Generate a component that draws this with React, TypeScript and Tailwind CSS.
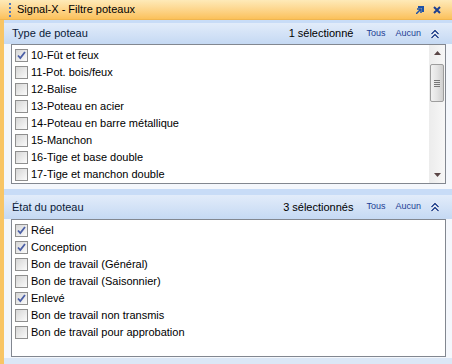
import React from "react";

type Item = { label: string; checked: boolean };

const TYPES: Item[] = [
  { label: "10-Fût et feux", checked: true },
  { label: "11-Pot. bois/feux", checked: false },
  { label: "12-Balise", checked: false },
  { label: "13-Poteau en acier", checked: false },
  { label: "14-Poteau en barre métallique", checked: false },
  { label: "15-Manchon", checked: false },
  { label: "16-Tige et base double", checked: false },
  { label: "17-Tige et manchon double", checked: false },
];

const ETATS: Item[] = [
  { label: "Réel", checked: true },
  { label: "Conception", checked: true },
  { label: "Bon de travail (Général)", checked: false },
  { label: "Bon de travail (Saisonnier)", checked: false },
  { label: "Enlevé", checked: true },
  { label: "Bon de travail non transmis", checked: false },
  { label: "Bon de travail pour approbation", checked: false },
];

function CheckBox({ checked }: { checked: boolean }) {
  return (
    <span className="relative w-[13px] h-[13px] shrink-0 border border-[#8f8f8f] bg-gradient-to-br from-[#d6d6d6] to-[#fbfbfb]">
      {checked && (
        <svg className="absolute left-0 top-0" width="11" height="11" viewBox="0 0 11 11">
          <path d="M2 5.5 L4.3 8 L9 2" fill="none" stroke="#4b5fa6" strokeWidth="1.8" />
        </svg>
      )}
    </span>
  );
}

function Row({ item }: { item: Item }) {
  return (
    <div className="flex items-center h-[17px] pl-[3px] gap-[3px]">
      <CheckBox checked={item.checked} />
      <span className="text-[11px] text-black leading-none">{item.label}</span>
    </div>
  );
}

function Chevrons() {
  return (
    <svg width="10" height="10" viewBox="0 0 10 10">
      <path d="M1.5 5 L5 1.5 L8.5 5 M1.5 9 L5 5.5 L8.5 9" fill="none" stroke="#ffffff" strokeWidth="3" />
      <path d="M1.5 5 L5 1.5 L8.5 5 M1.5 9 L5 5.5 L8.5 9" fill="none" stroke="#1e3f8c" strokeWidth="1.5" />
    </svg>
  );
}

function Header({ title, count, tall }: { title: string; count: string; tall?: boolean }) {
  return (
    <div className={`flex flex-col ${tall ? "h-[30px]" : "h-[24px]"}`}>
      <div className={`${tall ? "h-[6px]" : "h-[3px]"} bg-[#c8dcf7]`} />
      <div className="flex-1 flex items-center pl-[8px] pr-[12px] bg-gradient-to-b from-[#e2ecfa] to-[#c5d9f3]">
        <span className="text-[11px] text-[#0b1a38]">{title}</span>
        <span className="ml-auto text-[11px] text-black">{count}</span>
        <span className="ml-[13px] text-[9px] text-[#1c3d94]">Tous</span>
        <span className="ml-[10px] text-[9px] text-[#1c3d94]">Aucun</span>
        <span className="ml-[9px] flex"><Chevrons /></span>
      </div>
    </div>
  );
}

function ScrollBar() {
  return (
    <div className="w-[16px] flex flex-col bg-gradient-to-r from-[#ececec] to-[#f7f7f7]">
      <div className="h-[16px] flex items-center justify-center">
        <svg width="7" height="4" viewBox="0 0 7 4"><path d="M0 4 L3.5 0 L7 4 Z" fill="#5a4646" /></svg>
      </div>
      <div className="mt-[3px] h-[38px] mx-[1px] rounded-[2px] border border-[#9d9d9d] bg-gradient-to-r from-[#f2f2f2] via-[#e4e4e4] to-[#cfcfcf] flex flex-col items-center justify-center gap-[1px]">
        <div className="w-[6px] h-[1px] bg-[#777]" />
        <div className="w-[6px] h-[1px] bg-[#777]" />
        <div className="w-[6px] h-[1px] bg-[#777]" />
        <div className="w-[6px] h-[1px] bg-[#777]" />
      </div>
      <div className="flex-1" />
      <div className="h-[16px] flex items-center justify-center">
        <svg width="7" height="4" viewBox="0 0 7 4"><path d="M0 0 L3.5 4 L7 0 Z" fill="#5a4646" /></svg>
      </div>
    </div>
  );
}

export default function App() {
  return (
    <div className="w-[452px] h-[364px] flex flex-col bg-[#f4f7fc] font-['Liberation_Sans',Arial,sans-serif] overflow-hidden">
      <div className="h-[20px] flex items-center bg-gradient-to-b from-[#feeab8] to-[#fbc15a] border-b border-[#f1b64f]">
        <div className="ml-[9px] flex flex-col gap-[2px]">
          {[0, 1, 2, 3].map((i) => (
            <div key={i} className="w-[2px] h-[2px] bg-[#4f79c2]" />
          ))}
        </div>
        <span className="ml-[6px] text-[11px] text-black">Signal-X - Filtre poteaux</span>
        <svg className="ml-auto" width="8" height="8" viewBox="0 0 8 8">
          <path d="M2 0 H8 V6 H6 V2 H2 Z" fill="#1d52a8" />
          <path d="M0 8 L5 3 M1 3 H5 V7" fill="none" stroke="#1d52a8" strokeWidth="1.5" />
        </svg>
        <svg className="ml-[9px] mr-[11px]" width="8" height="8" viewBox="0 0 8 8">
          <path d="M1 1 L7 7 M7 1 L1 7" stroke="#1d3f8f" strokeWidth="2" />
        </svg>
      </div>
      <div className="flex-1 flex flex-col border-l-[4px] border-[#f8c565]">
        <Header title="Type de poteau" count="1 sélectionné" />
        <div className="ml-[7px] mr-[6px] h-[140px] border border-[#828790] bg-white flex">
          <div className="flex-1 pt-[2px]">
            {TYPES.map((t) => (
              <Row key={t.label} item={t} />
            ))}
          </div>
          <ScrollBar />
        </div>
        <div className="h-[5px]" />
        <Header title="État du poteau" count="3 sélectionnés" tall />
        <div className="ml-[7px] mr-[6px] h-[138px] border border-[#828790] bg-white pt-[2px]">
          {ETATS.map((t) => (
            <Row key={t.label} item={t} />
          ))}
        </div>
        <div className="h-[1px]" />
        <div className="flex-1 bg-[#dbe7f6]" />
      </div>
    </div>
  );
}
